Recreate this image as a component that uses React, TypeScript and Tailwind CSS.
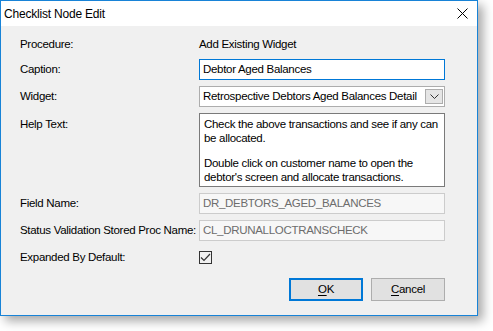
import type { ReactNode } from "react";

const font = { fontFamily: "'Liberation Sans', Arial, sans-serif" };

function Row({ label, children, h = "h-[21px]", top = false, mt }: {
  label: string;
  children: ReactNode;
  h?: string;
  top?: boolean;
  mt: string;
}) {
  return (
    <div className={`flex ${h} ${mt} ${top ? "items-start" : "items-center"}`}>
      <div className={`w-[179px] shrink-0 whitespace-nowrap ${top ? "pt-[3px]" : ""}`}>{label}</div>
      {children}
    </div>
  );
}

export default function App() {
  return (
    <div className="h-[331px] w-[493px] bg-white text-[11.5px] tracking-[-0.3px] text-black" style={font}>
      <div className="flex h-[316px] w-[478px] flex-col border border-[#1883d7] bg-white shadow-[5px_5px_10px_rgba(0,0,0,0.35)]">
        {/* title bar */}
        <div className="flex h-[25px] shrink-0 items-center justify-between pl-[3px] pr-[9px]">
          <span className="text-[12px] tracking-[-0.2px]">Checklist Node Edit</span>
          <svg width="11" height="11" viewBox="0 0 11 11" fill="none" stroke="#000" strokeWidth="1">
            <path d="M0.5 0.5l10 10M10.5 0.5l-10 10" />
          </svg>
        </div>

        <div className="flex-1 bg-[#f0f0f0] pl-[19px]">
          <Row label="Procedure:" mt="mt-[8px]">
            <span>Add Existing Widget</span>
          </Row>

          <Row label="Caption:" mt="mt-[4px]">
            <div className="flex h-[21px] w-[246px] items-center border border-[#0078d7] bg-white pl-[3px]">
              Debtor Aged Balances
            </div>
          </Row>

          <Row label="Widget:" mt="mt-[6px]">
            <div className="flex h-[21px] w-[246px] items-center justify-between border border-[#adadad] bg-white pl-[3px] pr-[1px]">
              <span className="whitespace-nowrap">Retrospective Debtors Aged Balances Detail</span>
              <div className="flex h-[15px] w-[18px] items-center justify-center border border-[#adadad] bg-[#e5e5e5]">
                <svg width="9" height="5" viewBox="0 0 9 5" fill="none" stroke="#333" strokeWidth="1">
                  <path d="M0.5 0.5l4 4 4-4" />
                </svg>
              </div>
            </div>
          </Row>

          <Row label="Help Text:" mt="mt-[6px]" h="h-[74px]" top>
            <div className="h-[74px] w-[246px] whitespace-nowrap border border-[#7a7a7a] bg-white pl-[4px] pt-[3px] leading-[14px]">
              <p>
                Check the above transactions and see if any can
                <br />
                be allocated.
              </p>
              <p className="mt-[11px]">
                Double click on customer name to open the
                <br />
                debtor's screen and allocate transactions.
              </p>
            </div>
          </Row>

          <Row label="Field Name:" mt="mt-[6px]">
            <div className="flex h-[21px] w-[246px] items-center border border-[#cccccc] bg-[#f7f7f7] pl-[3px] text-[#6d6d6d]">
              DR_DEBTORS_AGED_BALANCES
            </div>
          </Row>

          <Row label="Status Validation Stored Proc Name:" mt="mt-[6px]">
            <div className="flex h-[21px] w-[246px] items-center border border-[#cccccc] bg-[#f7f7f7] pl-[3px] text-[#6d6d6d]">
              CL_DRUNALLOCTRANSCHECK
            </div>
          </Row>

          <Row label="Expanded By Default:" mt="mt-[6px]">
            <div className="flex h-[13px] w-[13px] items-center justify-center border border-[#333] bg-transparent">
              <svg width="11" height="9" viewBox="0 0 11 9" fill="none" stroke="#333" strokeWidth="1.2">
                <path d="M1 4.5l3 3 6-6.5" />
              </svg>
            </div>
          </Row>

          <div className="mt-[10px] flex w-[425px] justify-end gap-[8px]">
            <button className="h-[23px] w-[74px] border-2 border-[#0078d7] bg-[#e1e1e1]">
              <span className="underline underline-offset-2">O</span>K
            </button>
            <button className="h-[23px] w-[74px] border border-[#adadad] bg-[#e1e1e1]">
              <span className="underline underline-offset-2">C</span>ancel
            </button>
          </div>
        </div>
      </div>
    </div>
  );
}
